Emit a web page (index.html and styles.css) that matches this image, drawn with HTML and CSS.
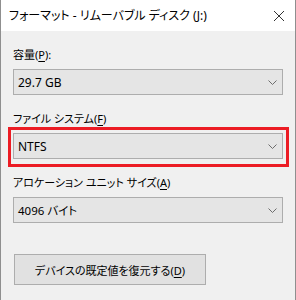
FILE: index.html
```html
<!DOCTYPE html>
<html lang="ja">
    <head>
        <meta charset="UTF-8" />
        <meta name="viewport" content="width=device-width, initial-scale=1.0" />
        <title>フォーマット</title>
        <link rel="stylesheet" href="styles.css">
    </head>

    <body>
        <div class="window">
            <div class="titlebar">
                <span class="title">フォーマット - リムーバブル ディスク (J:)</span>
                <svg class="close" width="12" height="12" viewBox="0 0 12 12">
                    <path d="M1 1 L11 11 M11 1 L1 11" stroke="#333" stroke-width="1" fill="none" />
                </svg>
            </div>

            <div class="content">
                <div class="field">
                    <div class="label">容量(<u>P</u>):</div>
                    <div class="combo">
                        <span>29.7 GB</span>
                        <svg class="chevron" width="9" height="5" viewBox="0 0 9 5">
                            <path d="M0.5 0.5 L4.5 4.5 L8.5 0.5" stroke="#6d6d6d" stroke-width="1" fill="none" />
                        </svg>
                    </div>
                </div>

                <div class="field">
                    <div class="label">ファイル システム(<u>F</u>)</div>
                    <div class="combo marked">
                        <span>NTFS</span>
                        <svg class="chevron" width="9" height="5" viewBox="0 0 9 5">
                            <path d="M0.5 0.5 L4.5 4.5 L8.5 0.5" stroke="#6d6d6d" stroke-width="1" fill="none" />
                        </svg>
                    </div>
                </div>

                <div class="field">
                    <div class="label">アロケーション ユニット サイズ(<u>A</u>)</div>
                    <div class="combo">
                        <span class="jp">4096 バイト</span>
                        <svg class="chevron" width="9" height="5" viewBox="0 0 9 5">
                            <path d="M0.5 0.5 L4.5 4.5 L8.5 0.5" stroke="#6d6d6d" stroke-width="1" fill="none" />
                        </svg>
                    </div>
                </div>

                <button class="restore">デバイスの既定値を復元する(<u>D</u>)</button>
            </div>
        </div>
    </body>
</html>
```

FILE: styles.css
```css
html, body {
    margin: 0;
    padding: 0;
}

body {
    font-family: "Noto Sans", "Noto Sans CJK JP", sans-serif;
    font-size: 12px;
    font-feature-settings: "palt" 1;
    color: #000;
    background-color: #f0f0f0;
}

.window {
    height: 300px;
    box-sizing: border-box;
    border-left: 1px solid #8f8f8f;
    border-right: 1px solid #8f8f8f;
    background-color: #f0f0f0;
}

.titlebar {
    height: 31px;
    background-color: #fff;
    display: flex;
    align-items: center;
    justify-content: space-between;
    padding: 0 10px 0 8px;
}

.title {
    line-height: 16px;
}

.content {
    padding: 16px 12px 0 12px;
}

.label {
    font-size: 11px;
    line-height: 16px;
    margin-bottom: 6px;
}

.jp {
    font-size: 11.5px;
}

u {
    text-decoration-thickness: 1px;
    text-underline-offset: 2px;
}

.field {
    margin-bottom: 16px;
}

.combo {
    position: relative;
    height: 26px;
    box-sizing: border-box;
    border: 1px solid #adadad;
    background-color: #e5e5e5;
    display: flex;
    align-items: center;
    justify-content: space-between;
    padding: 0 5px 0 4px;
}

.marked::after {
    content: "";
    position: absolute;
    top: -7px;
    left: -6px;
    right: -7px;
    bottom: -9px;
    border: 3px solid #ec1c24;
}

.restore {
    margin: 15px 0 0 1px;
    width: 192px;
    height: 31px;
    border: 1px solid #adadad;
    background-color: #e1e1e1;
    font-family: inherit;
    font-size: 11px;
    font-feature-settings: "palt" 1;
    color: #000;
    padding: 0;
}
```
